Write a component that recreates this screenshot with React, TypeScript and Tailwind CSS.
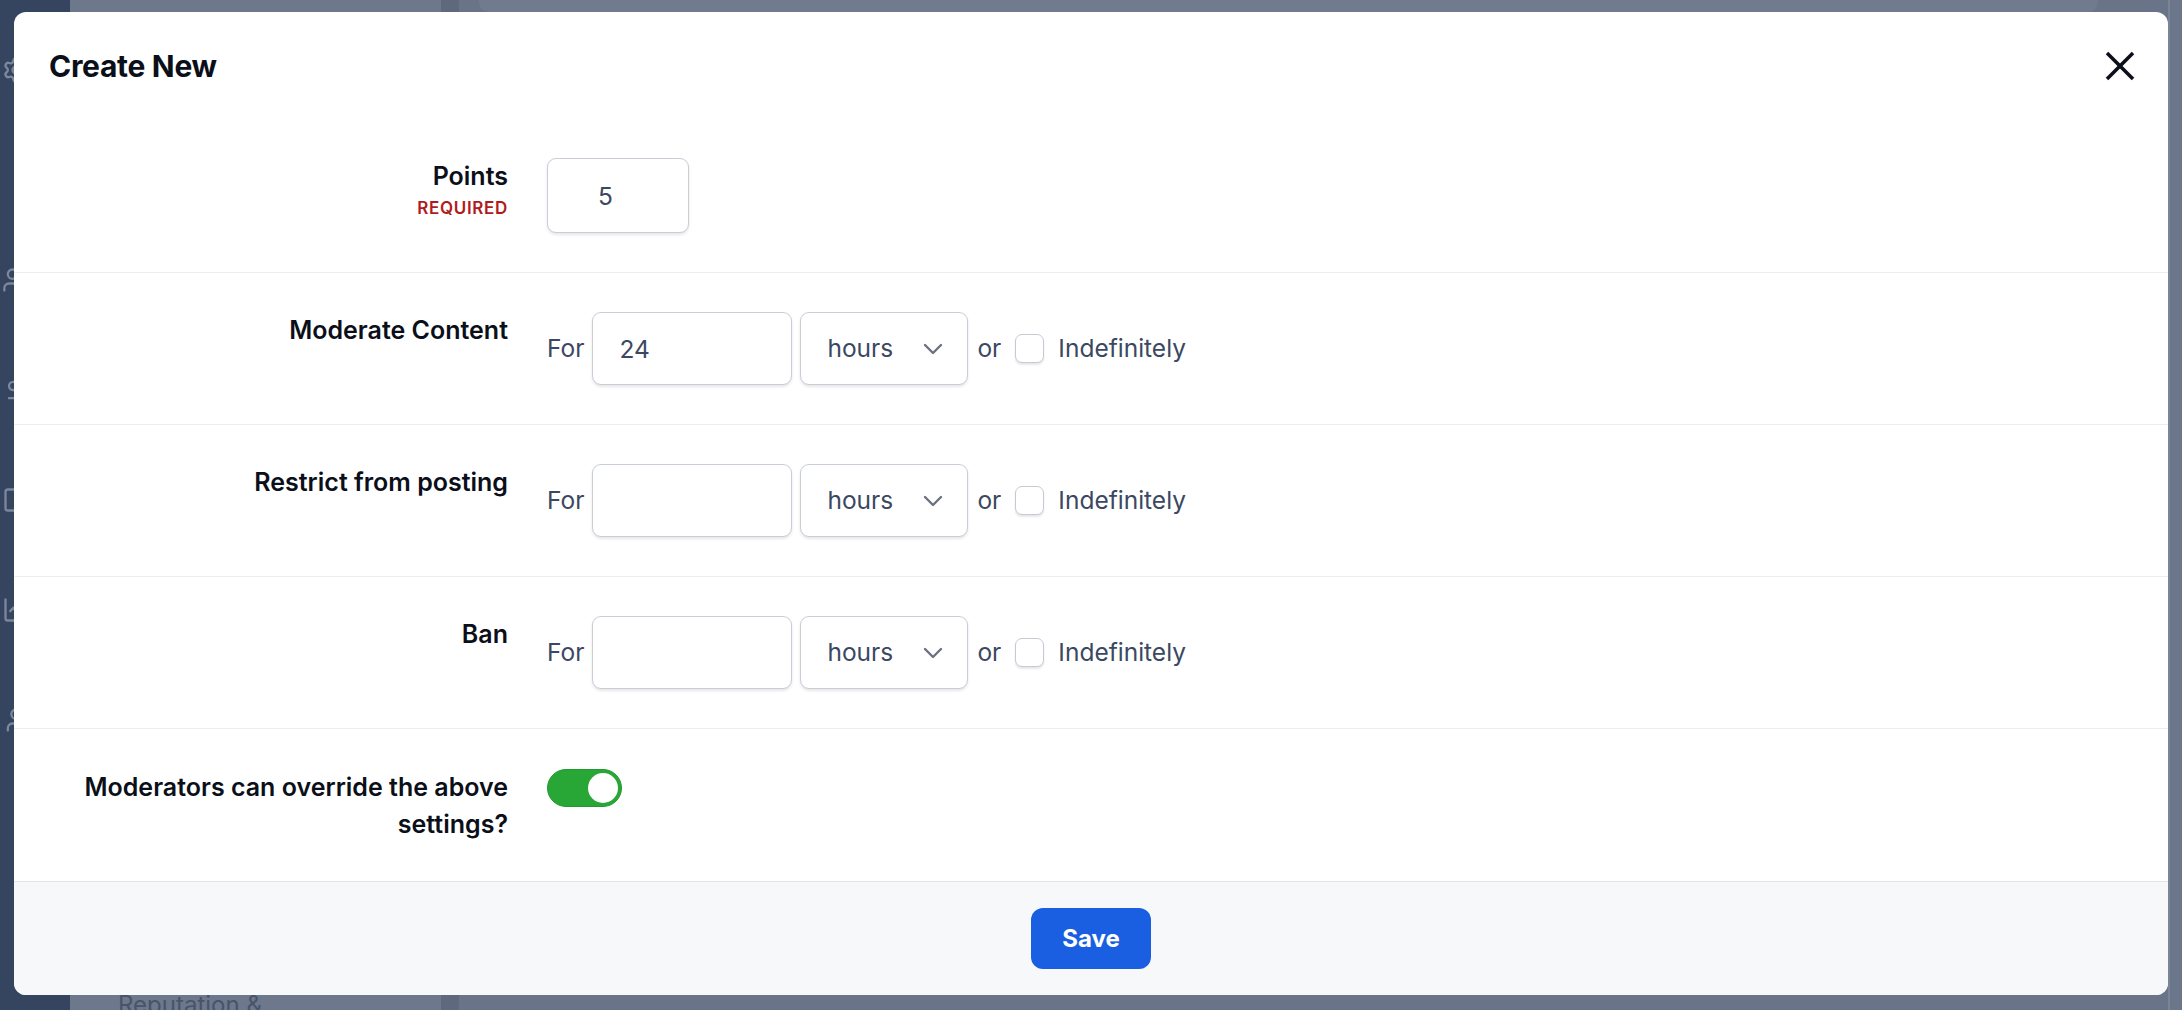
import { Settings, Users, DollarSign, Square, LineChart, User } from 'lucide-react'

interface DurationRowProps {
  label: string
  value?: string
}

const Chevron = () => (
  <svg width="20" height="12" viewBox="0 0 20 12" fill="none">
    <polyline points="2,2 10,10 18,2" stroke="#6b7280" strokeWidth="2.4" strokeLinecap="round" strokeLinejoin="round" />
  </svg>
)

const RowLabel = ({ label, sub }: { label: string; sub?: string }) => (
  <div className="w-[459px] shrink-0 text-right">
    <div className="text-[25px] leading-[37px] font-semibold text-[#0b0f19]">{label}</div>
    {sub && (
      <div className="mt-[2px] text-[17px] leading-[22px] font-semibold tracking-[0.04em] text-[#b01c1c]">
        {sub}
      </div>
    )}
  </div>
)

const DurationRow = ({ label, value = '' }: DurationRowProps) => {
  return (
    <div className="flex items-start gap-[39px] pl-[35px] py-[39px] border-b border-[#eceef1]">
      <RowLabel label={label} />
      <div className="flex items-center h-[73px] text-[24.5px] text-[#3b4862]">
        <span>For</span>
        <input
          defaultValue={value}
          className="ml-[8px] w-[200px] h-[73px] rounded-[9px] border border-[#c8cdd6] bg-white pl-[26px] text-[24.5px] text-[#3b4862] shadow-[0_2px_3px_rgba(15,23,42,0.10)] outline-none"
        />
        <div className="ml-[8px] flex items-center justify-between w-[168px] h-[73px] rounded-[9px] border border-[#c8cdd6] bg-white pl-[26px] pr-[24px] shadow-[0_2px_3px_rgba(15,23,42,0.10)]">
          <span>hours</span>
          <Chevron />
        </div>
        <span className="ml-[9px]">or</span>
        <div className="ml-[14px] w-[29px] h-[29px] rounded-[7px] border border-[#c5cad3] bg-white shadow-[0_2px_2px_rgba(15,23,42,0.10)]"></div>
        <span className="ml-[14px]">Indefinitely</span>
      </div>
    </div>
  )
}

const App = () => {
  return (
    <div className="relative w-[2182px] h-[1010px] overflow-hidden font-['Inter',sans-serif]">
      {/* Dimmed app behind */}
      <div className="flex h-full">
        <div className="w-[70px] bg-[#35455f] flex flex-col items-start pt-[56px] gap-[82px] pl-[2px] text-[#7a879c]">
          <Settings size={28} />
          <Users size={28} className="mt-[100px]" />
          <DollarSign size={28} />
          <Square size={28} />
          <LineChart size={28} />
          <User size={28} />
        </div>
        <div className="w-[371px] bg-[#6d788d] flex flex-col justify-end">
          <div className="pl-[48px] text-[24px] leading-[34px] text-[#485469] -mb-[12px]">Reputation &amp;</div>
        </div>
        <div className="w-[18px] bg-[#5e697d]"></div>
        <div className="flex-1 bg-[#6a7489] flex flex-col">
          <div className="h-[12px] ml-[20px] mr-[70px] bg-[#707b90] rounded-b-[10px]"></div>
        </div>
        <div className="w-[14px] bg-[#6b768b] border-l-2 border-[#7a8498]"></div>
      </div>

      {/* Modal */}
      <div className="absolute inset-0 pt-[12px] pl-[14px] pr-[14px]">
        <div className="bg-white rounded-[12px] overflow-hidden flex flex-col">
          {/* Header */}
          <div className="h-[110px] flex items-center justify-between pl-[35px] pr-[32px] pb-[2px]">
            <h2 className="text-[30px] font-bold text-[#0b0f19] tracking-[-0.01em]">Create New</h2>
            <svg width="32" height="32" viewBox="0 0 32 32" fill="none">
              <line x1="3" y1="3" x2="29" y2="29" stroke="#0b0f19" strokeWidth="3.6" />
              <line x1="29" y1="3" x2="3" y2="29" stroke="#0b0f19" strokeWidth="3.6" />
            </svg>
          </div>

          {/* Points */}
          <div className="flex items-start gap-[39px] pl-[35px] pt-[36px] pb-[39px] border-b border-[#eceef1]">
            <RowLabel label="Points" sub="REQUIRED" />
            <input
              defaultValue="5"
              className="w-[142px] h-[75px] rounded-[9px] border border-[#c8cdd6] bg-white pl-[50px] text-[24.5px] text-[#3b4862] shadow-[0_2px_3px_rgba(15,23,42,0.10)] outline-none"
            />
          </div>

          <DurationRow label="Moderate Content" value="24" />
          <DurationRow label="Restrict from posting" />
          <DurationRow label="Ban" />

          {/* Override toggle */}
          <div className="flex items-start gap-[39px] pl-[35px] pt-[40px] pb-[38px]">
            <RowLabel label="Moderators can override the above settings?" />
            <div className="w-[75px] h-[38px] rounded-full bg-[#28a737] border-[1.5px] border-[#219a30] flex items-center justify-end pr-[3px]">
              <div className="w-[30px] h-[30px] rounded-full bg-white"></div>
            </div>
          </div>

          {/* Footer */}
          <div className="h-[114px] bg-[#f7f8fa] border-t border-[#e1e4e9] flex items-center justify-center">
            <button className="w-[120px] h-[61px] rounded-[12px] bg-[#1a5fe2] text-white text-[24px] font-bold">
              Save
            </button>
          </div>
        </div>
      </div>
    </div>
  )
}

export default App
